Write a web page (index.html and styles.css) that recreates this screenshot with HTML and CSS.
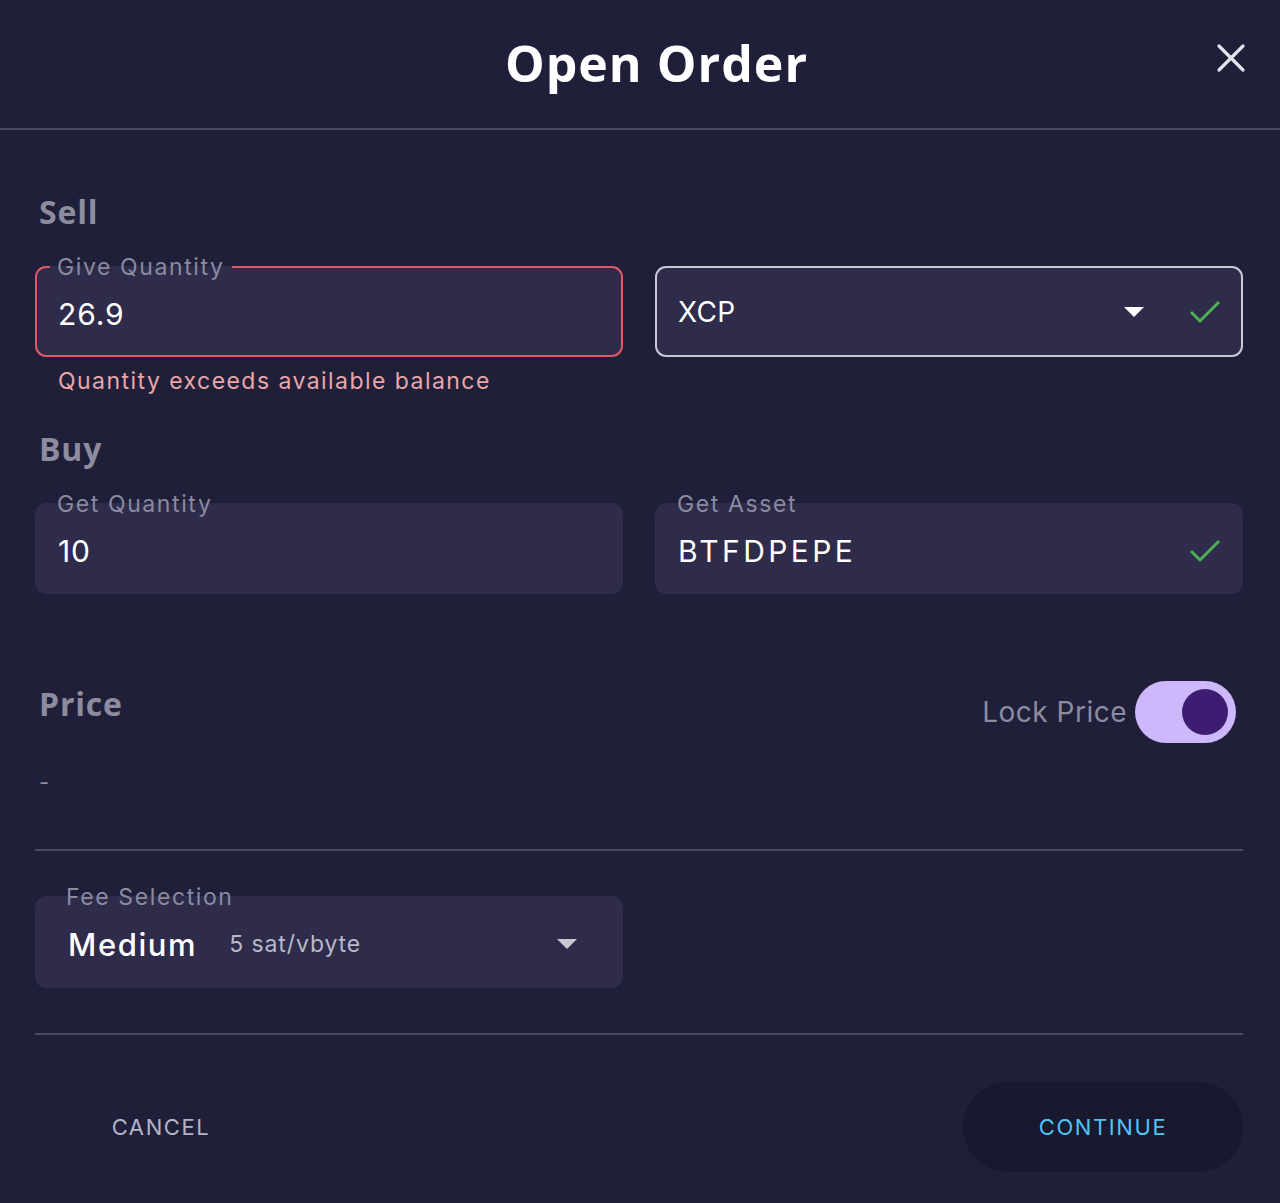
FILE: index.html
```html
<!DOCTYPE html>
<html lang="en">
<head>
<meta charset="utf-8">
<title>Open Order</title>
<link rel="stylesheet" href="styles.css">
</head>
<body>
<div class="modal">
  <header class="header">
    <h1 class="title">Open Order</h1>
    <button class="close" aria-label="Close">
      <svg width="30" height="30" viewBox="0 0 30 30"><path d="M3 3 L27 27 M27 3 L3 27" stroke="#e4e4ec" stroke-width="3.2" stroke-linecap="round" fill="none"/></svg>
    </button>
  </header>

  <main class="body">
    <h2 class="section-title">Sell</h2>
    <div class="row">
      <div class="col">
        <fieldset class="field field-error">
          <legend class="field-label">Give Quantity</legend>
          <div class="field-content"><span class="value">26.9</span></div>
        </fieldset>
        <p class="helper">Quantity exceeds available balance</p>
      </div>
      <div class="col">
        <div class="select-box">
          <span class="value value-sm">XCP</span>
          <span class="spacer"></span>
          <svg class="caret" width="20" height="10" viewBox="0 0 20 10"><path d="M0 0 L20 0 L10 10 Z" fill="#ffffff"/></svg>
          <svg class="check" width="32" height="26" viewBox="0 0 32 26"><path d="M2 13 L11 22 L30 3" stroke="#4caf50" stroke-width="3" fill="none"/></svg>
        </div>
      </div>
    </div>

    <h2 class="section-title buy-title">Buy</h2>
    <div class="row">
      <fieldset class="field field-filled">
        <legend class="field-label">Get Quantity</legend>
        <div class="field-content"><span class="value">10</span></div>
      </fieldset>
      <fieldset class="field field-filled">
        <legend class="field-label">Get Asset</legend>
        <div class="field-content">
          <span class="value value-wide">BTFDPEPE</span>
          <span class="spacer"></span>
          <svg class="check" width="32" height="26" viewBox="0 0 32 26"><path d="M2 13 L11 22 L30 3" stroke="#4caf50" stroke-width="3" fill="none"/></svg>
        </div>
      </fieldset>
    </div>

    <div class="price-row">
      <h2 class="section-title price-title">Price</h2>
      <label class="lock">
        <span class="lock-label">Lock Price</span>
        <span class="toggle"><span class="knob"></span></span>
      </label>
    </div>
    <p class="price-value">-</p>

    <hr class="divider">

    <fieldset class="field field-filled fee">
      <legend class="field-label">Fee Selection</legend>
      <div class="field-content">
        <span class="fee-name">Medium</span>
        <span class="fee-rate">5 sat/vbyte</span>
        <span class="spacer"></span>
        <svg class="caret" width="20" height="10" viewBox="0 0 20 10"><path d="M0 0 L20 0 L10 10 Z" fill="#c8c8d4"/></svg>
      </div>
    </fieldset>

    <hr class="divider divider-2">

    <div class="actions">
      <button class="btn btn-cancel">CANCEL</button>
      <button class="btn btn-continue">CONTINUE</button>
    </div>
  </main>
</div>
</body>
</html>
```

FILE: styles.css
```css
* { box-sizing: border-box; }

html, body {
  margin: 0;
  padding: 0;
  background: #1f1f3a;
}

body {
  font-family: "Inter", "Open Sans", sans-serif;
  color: #ffffff;
  width: 1280px;
  height: 1203px;
  overflow: hidden;
}

.modal {
  width: 1280px;
}

.header {
  position: relative;
  height: 130px;
  border-bottom: 2px solid #4a4a5f;
  display: flex;
  align-items: center;
  justify-content: center;
  padding-left: 33px;
  padding-bottom: 2px;
}

.title {
  margin: 0;
  font-family: "Open Sans", sans-serif;
  font-weight: 700;
  font-size: 50px;
  line-height: 60px;
  letter-spacing: 1px;
  color: #ffffff;
}

.close {
  position: absolute;
  right: 34px;
  top: 43px;
  width: 30px;
  height: 30px;
  padding: 0;
  border: 0;
  background: none;
  display: flex;
}

.body {
  padding: 64px 37px 0 35px;
}

.section-title {
  margin: 0;
  font-family: "Open Sans", sans-serif;
  font-weight: 700;
  font-size: 32px;
  line-height: 36px;
  letter-spacing: 0.8px;
  color: #8c8c9e;
  padding-left: 4px;
}

.row {
  display: grid;
  grid-template-columns: 1fr 1fr;
  column-gap: 32px;
  margin-top: 25px;
  align-items: start;
}

.field {
  margin: 0;
  padding: 0 0 7px 13px;
  min-width: 0;
  border: 2px solid transparent;
  border-radius: 11px;
  background: #2e2c4a;
}

.field-error {
  border-color: #e05866;
}

.field-label {
  padding: 0 7px;
  font-size: 23px;
  line-height: 24px;
  color: #8a8aa0;
  letter-spacing: 1.6px;
}

.field-content {
  height: 69px;
  display: flex;
  align-items: center;
  padding: 0 20px 0 8px;
}

.value {
  font-size: 30px;
  color: #ffffff;
  letter-spacing: 0.9px;
}

.value-sm {
  font-size: 28px;
  letter-spacing: 0.3px;
}

.value-wide {
  letter-spacing: 3.4px;
}

.spacer { flex: 1; }

.helper {
  margin: 12px 0 0 23px;
  font-size: 23px;
  line-height: 24px;
  color: #eaa6a8;
  letter-spacing: 1.45px;
}

.select-box {
  margin-top: 11px;
  height: 91px;
  border: 2px solid #c9c9d6;
  border-radius: 11px;
  background: #2e2c4a;
  display: flex;
  align-items: center;
  padding: 0 20px 0 21px;
}

.caret { margin-right: 45px; }

.buy-title { margin-top: 38px; }

.price-row {
  display: flex;
  justify-content: space-between;
  align-items: flex-start;
  margin-top: 87px;
  padding-right: 7px;
}

.price-title { margin-top: 5px; }

.lock {
  display: flex;
  align-items: center;
  gap: 8px;
}

.lock-label {
  font-size: 28px;
  color: #8c8ca0;
  letter-spacing: 0.5px;
}

.toggle {
  width: 101px;
  height: 62px;
  border-radius: 31px;
  background: #cdb8fb;
  display: flex;
  align-items: center;
  justify-content: flex-end;
  padding-right: 8px;
}

.knob {
  width: 46px;
  height: 46px;
  border-radius: 50%;
  background: #3d1d72;
}

.price-value {
  margin: 27px 0 0 4px;
  font-size: 22px;
  line-height: 24px;
  color: #8c8ca0;
}

.divider {
  margin: 55px 0 0;
  border: 0;
  height: 2px;
  background: #4a4a5f;
}

.fee {
  width: 588px;
  margin-top: 34px;
  padding-left: 22px;
}

.fee .field-content { height: 70px; padding-left: 9px; padding-right: 44px; }

.fee-name {
  font-size: 31px;
  font-weight: 500;
  color: #ffffff;
  letter-spacing: 1.6px;
}

.fee-rate {
  margin-left: 32px;
  font-size: 23px;
  color: #b8b8c8;
  letter-spacing: 0.9px;
}

.fee .caret { margin-right: 0; }

.divider-2 { margin-top: 45px; }

.actions {
  margin-top: 47px;
  display: flex;
  justify-content: space-between;
}

.btn {
  height: 90px;
  border: 0;
  font-family: "Inter", "Open Sans", sans-serif;
  font-size: 22px;
  letter-spacing: 1.6px;
  cursor: pointer;
}

.btn-cancel {
  width: 252px;
  background: none;
  color: #b4b4c6;
}

.btn-continue {
  width: 280px;
  border-radius: 45px;
  background: #18182e;
  color: #4fc3f7;
}
```
